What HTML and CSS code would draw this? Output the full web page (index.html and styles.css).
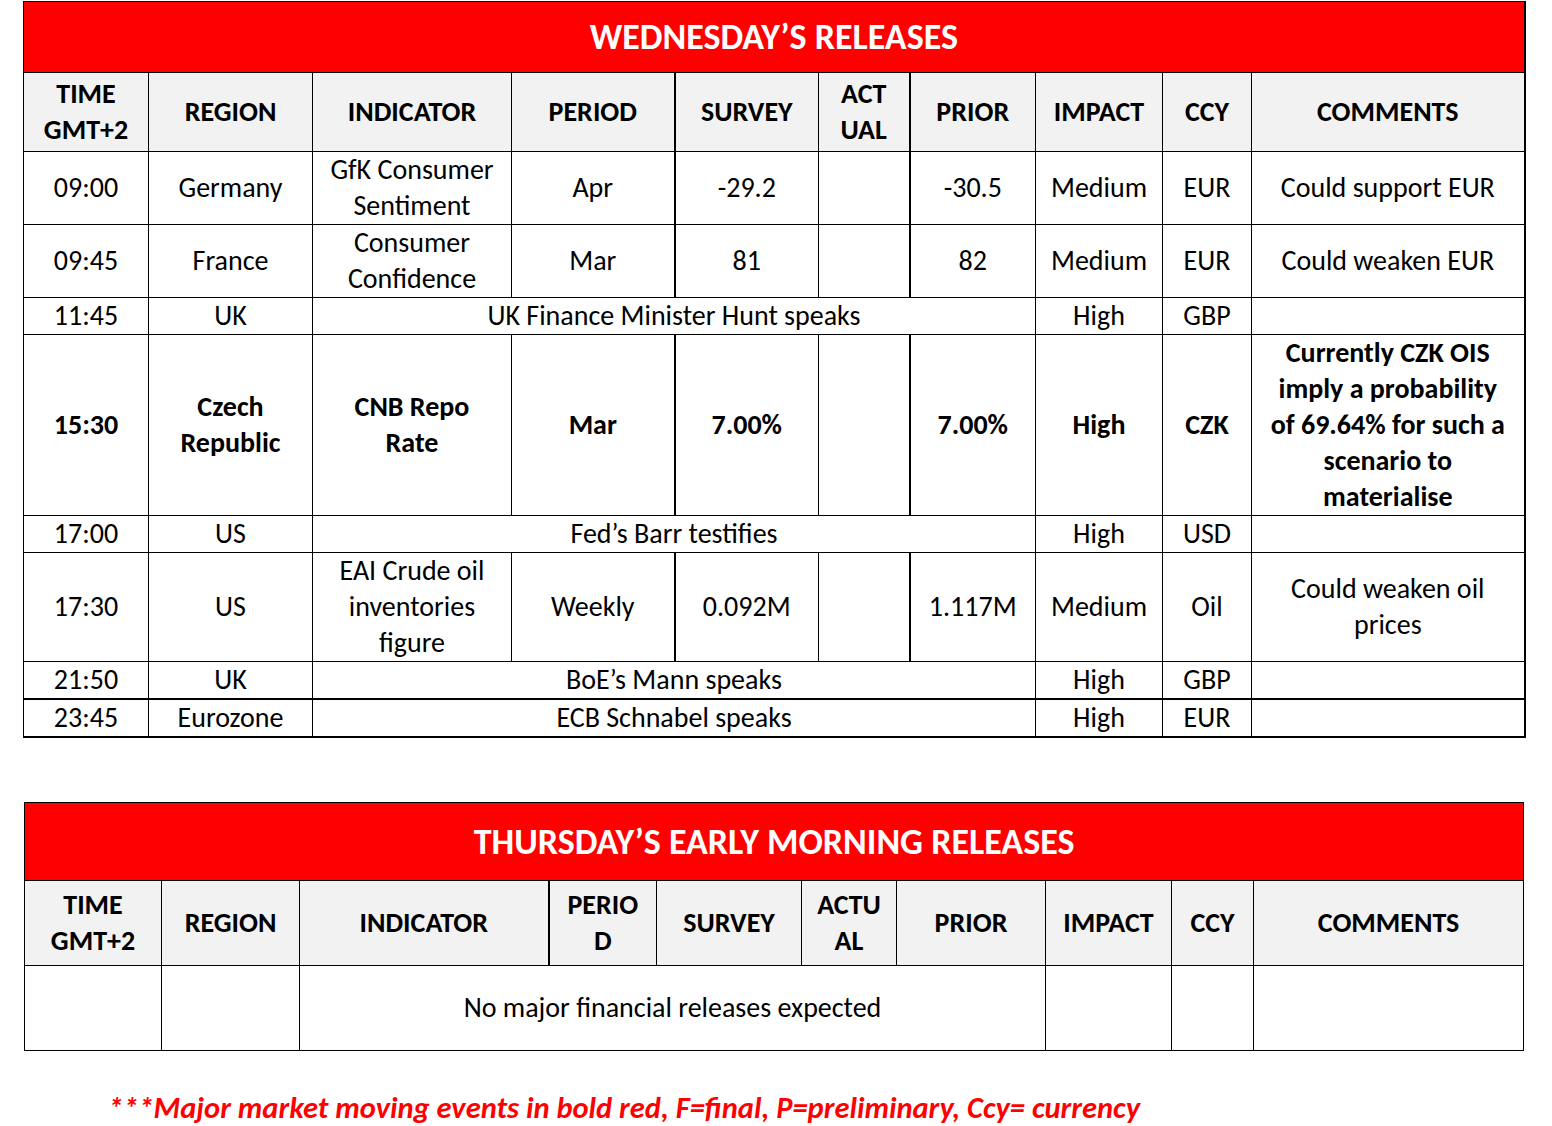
FILE: index.html
```html
<!DOCTYPE html>
<html>
<head>
<meta charset="utf-8">
<link rel="stylesheet" href="styles.css">
</head>
<body>
<table class="grid t1">
  <colgroup>
    <col style="width:125px"><col style="width:164px"><col style="width:199px"><col style="width:163px"><col style="width:144px"><col style="width:91px"><col style="width:126px"><col style="width:127px"><col style="width:89px"><col style="width:273px">
  </colgroup>
  <tr class="title"><td colspan="10">WEDNESDAY’S RELEASES</td></tr>
  <tr class="head">
    <th>TIME<br>GMT+2</th><th>REGION</th><th>INDICATOR</th><th class="thickr">PERIOD</th><th>SURVEY</th><th class="thickr">ACT<br>UAL</th><th>PRIOR</th><th>IMPACT</th><th>CCY</th><th>COMMENTS</th>
  </tr>
  <tr class="r2">
    <td>09:00</td><td>Germany</td><td>GfK Consumer<br>Sentiment</td><td class="thickr">Apr</td><td>-29.2</td><td class="thickr"></td><td>-30.5</td><td>Medium</td><td>EUR</td><td>Could support EUR</td>
  </tr>
  <tr class="r2">
    <td>09:45</td><td>France</td><td>Consumer<br>Confidence</td><td class="thickr">Mar</td><td>81</td><td class="thickr"></td><td>82</td><td>Medium</td><td>EUR</td><td>Could weaken EUR</td>
  </tr>
  <tr class="r1">
    <td>11:45</td><td>UK</td><td colspan="5">UK Finance Minister Hunt speaks</td><td>High</td><td>GBP</td><td></td>
  </tr>
  <tr class="r5 bold">
    <td>15:30</td><td>Czech<br>Republic</td><td>CNB Repo<br>Rate</td><td class="thickr">Mar</td><td>7.00%</td><td class="thickr"></td><td>7.00%</td><td>High</td><td>CZK</td><td>Currently CZK OIS<br>imply a probability<br>of 69.64% for such a<br>scenario to<br>materialise</td>
  </tr>
  <tr class="r1">
    <td>17:00</td><td>US</td><td colspan="5">Fed’s Barr testifies</td><td>High</td><td>USD</td><td></td>
  </tr>
  <tr class="r3">
    <td>17:30</td><td>US</td><td>EAI Crude oil<br>inventories<br>figure</td><td class="thickr">Weekly</td><td>0.092M</td><td class="thickr"></td><td>1.117M</td><td>Medium</td><td>Oil</td><td>Could weaken oil<br>prices</td>
  </tr>
  <tr class="r1 thickb">
    <td>21:50</td><td>UK</td><td colspan="5">BoE’s Mann speaks</td><td>High</td><td>GBP</td><td></td>
  </tr>
  <tr class="r1 last">
    <td>23:45</td><td>Eurozone</td><td colspan="5">ECB Schnabel speaks</td><td>High</td><td>EUR</td><td></td>
  </tr>
</table>

<table class="grid t2">
  <colgroup>
    <col style="width:137px"><col style="width:138px"><col style="width:249px"><col style="width:108px"><col style="width:145px"><col style="width:95px"><col style="width:149px"><col style="width:126px"><col style="width:82px"><col style="width:270px">
  </colgroup>
  <tr class="title"><td colspan="10">THURSDAY’S EARLY MORNING RELEASES</td></tr>
  <tr class="head h2">
    <th>TIME<br>GMT+2</th><th>REGION</th><th class="thickr">INDICATOR</th><th>PERIO<br>D</th><th>SURVEY</th><th>ACTU<br>AL</th><th>PRIOR</th><th>IMPACT</th><th>CCY</th><th>COMMENTS</th>
  </tr>
  <tr class="empty">
    <td></td><td></td><td colspan="5">No major financial releases expected</td><td></td><td></td><td></td>
  </tr>
</table>

<p class="note">***Major market moving events in bold red, F=final, P=preliminary, Ccy= currency</p>
</body>
</html>
```
FILE: styles.css
```css
html, body {
  margin: 0;
  padding: 0;
  background: #ffffff;
}
body {
  font-family: Carlito, Lato, "Liberation Sans", sans-serif;
  color: #000;
  width: 1552px;
  height: 1126px;
  overflow: hidden;
}
.grid {
  border-collapse: collapse;
  table-layout: fixed;
  font-size: 28px;
  line-height: 36px;
}
.t1 {
  width: 1501px;
  margin: 1px 0 0 23px;
  border-right: 2px solid #000;
}
.t2 {
  width: 1499px;
  margin: 64px 0 0 24px;
}
.grid td, .grid th {
  border: 1px solid #000;
  padding: 0;
  text-align: center;
  vertical-align: middle;
  overflow: visible;
  white-space: nowrap;
}
.title td {
  background: #ff0000;
  color: #ffffff;
  font-weight: bold;
  font-size: 36px;
  height: 70px;
}
.t2 .title td {
  height: 77px;
}
.head th {
  background: #f2f2f2;
  font-weight: bold;
  height: 78px;
}
.head.h2 th {
  height: 84px;
}
.r1 td { height: 36px; }
.r2 td { height: 72px; }
.r3 td { height: 108px; }
.r5 td { height: 180px; }
.empty td { height: 84px; }
.bold td { font-weight: bold; }
.grid .thickr { border-right: 2px solid #000; }
.thickb td { border-bottom: 2px solid #000; }
.last td { border-bottom: 2px solid #000; }
.note {
  margin: 39px 0 0 108px;
  color: #ff0000;
  font-weight: bold;
  font-style: italic;
  font-size: 30.5px;
  line-height: 36px;
}
```
